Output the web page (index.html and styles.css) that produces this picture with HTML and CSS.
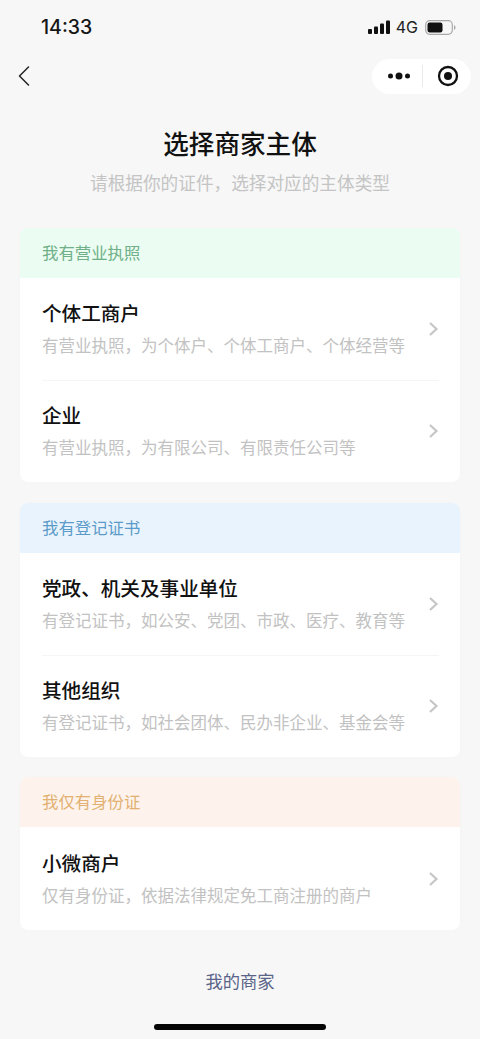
FILE: index.html
```html
<!DOCTYPE html>
<html lang="zh-CN">
<head>
<meta charset="utf-8">
<title>选择商家主体</title>
<link rel="stylesheet" href="styles.css">
</head>
<body>
<div class="page">
  <div class="status">
    <span class="time">14:33</span>
    <div class="status-right">
      <svg class="signal" width="22" height="14" viewBox="0 0 22 14"><rect x="0" y="9" width="4" height="5" rx="1"/><rect x="6" y="6.5" width="4" height="7.5" rx="1"/><rect x="12" y="3.5" width="4" height="10.5" rx="1"/><rect x="18" y="0.5" width="4" height="13.5" rx="1"/></svg>
      <span class="net">4G</span>
      <svg class="battery" width="31" height="15" viewBox="0 0 31 15"><rect x="0.7" y="0.7" width="26.6" height="13.6" rx="4" fill="none" stroke="#a9a9a9" stroke-width="1.2"/><rect x="2.5" y="2.5" width="15" height="10" rx="2.2" fill="#111"/><path d="M29 5.2c1 .3 1.5 1.1 1.5 2.3s-.5 2-1.5 2.3z" fill="#a9a9a9"/></svg>
    </div>
  </div>
  <div class="nav">
    <svg class="back" width="14" height="22" viewBox="0 0 14 22"><path d="M11.5 2 2.500 11l9 9" fill="none" stroke="#222" stroke-width="1.500" stroke-linecap="round" stroke-linejoin="round"/></svg>
    <div class="capsule">
      <svg width="24" height="8" viewBox="0 0 24 8"><circle cx="3.500" cy="4" r="2.500"/><circle cx="12" cy="4" r="3.500"/><circle cx="20.500" cy="4" r="2.500"/></svg>
      <i class="capsule-line"></i>
      <svg width="22" height="22" viewBox="0 0 22 22"><circle cx="11" cy="11" r="9" fill="none" stroke="#111" stroke-width="2.300"/><circle cx="11" cy="11" r="4"/></svg>
    </div>
  </div>
  <h1 class="title">选择商家主体</h1>
  <p class="subtitle">请根据你的证件，选择对应的主体类型</p>

  <section class="card">
    <div class="card-head head-green">我有营业执照</div>
    <div class="row">
      <div class="row-text"><div class="row-title">个体工商户</div><div class="row-sub">有营业执照，为个体户、个体工商户、个体经营等</div></div>
      <svg class="chev" width="11" height="16" viewBox="0 0 11 16"><path d="M2 2l6.500 6L2 14" fill="none" stroke="#c6c6c6" stroke-width="2.200"/></svg>
    </div>
    <div class="row">
      <div class="row-text"><div class="row-title">企业</div><div class="row-sub">有营业执照，为有限公司、有限责任公司等</div></div>
      <svg class="chev" width="11" height="16" viewBox="0 0 11 16"><path d="M2 2l6.500 6L2 14" fill="none" stroke="#c6c6c6" stroke-width="2.200"/></svg>
    </div>
  </section>

  <section class="card">
    <div class="card-head head-blue">我有登记证书</div>
    <div class="row">
      <div class="row-text"><div class="row-title">党政、机关及事业单位</div><div class="row-sub">有登记证书，如公安、党团、市政、医疗、教育等</div></div>
      <svg class="chev" width="11" height="16" viewBox="0 0 11 16"><path d="M2 2l6.500 6L2 14" fill="none" stroke="#c6c6c6" stroke-width="2.200"/></svg>
    </div>
    <div class="row">
      <div class="row-text"><div class="row-title">其他组织</div><div class="row-sub">有登记证书，如社会团体、民办非企业、基金会等</div></div>
      <svg class="chev" width="11" height="16" viewBox="0 0 11 16"><path d="M2 2l6.500 6L2 14" fill="none" stroke="#c6c6c6" stroke-width="2.200"/></svg>
    </div>
  </section>

  <section class="card">
    <div class="card-head head-orange">我仅有身份证</div>
    <div class="row row-single">
      <div class="row-text"><div class="row-title">小微商户</div><div class="row-sub">仅有身份证，依据法律规定免工商注册的商户</div></div>
      <svg class="chev" width="11" height="16" viewBox="0 0 11 16"><path d="M2 2l6.500 6L2 14" fill="none" stroke="#c6c6c6" stroke-width="2.200"/></svg>
    </div>
  </section>

  <div class="mine">我的商家</div>
  <div class="home"></div>
</div>
</body>
</html>
```
FILE: styles.css
```css
* { box-sizing: border-box; }
html, body { margin: 0; padding: 0; }
body {
  background: #f7f7f7;
  font-family: "Noto Sans CJK SC", "Noto Sans", sans-serif;
  color: #111;
}
.page {
  width: 480px;
  height: 1039px;
  overflow: hidden;
  display: flex;
  flex-direction: column;
}
.status {
  height: 54px;
  padding: 0 24px 0 41px;
  display: flex;
  align-items: center;
  justify-content: space-between;
}
.time {
  font: 500 19.500px/26px Inter, "Liberation Sans", sans-serif;
  color: #161616;
}
.status-right { display: flex; align-items: center; }
.signal { fill: #111; margin-right: 6px; }
.net {
  font: 400 16px/20px Inter, "Liberation Sans", sans-serif;
  color: #222;
  margin-right: 7px;
}
.nav {
  height: 44px;
  padding: 0 9px 0 17px;
  display: flex;
  align-items: center;
  justify-content: space-between;
}
.capsule {
  width: 99px;
  height: 35px;
  border-radius: 18px;
  background: #fff;
  display: flex;
  align-items: center;
  padding: 0 0 0 15px;
}
.capsule svg { fill: #111; flex: none; }
.capsule-line {
  width: 1px;
  height: 22px;
  background: #eaeaea;
  margin: 0 14px 0 11px;
}
.title {
  margin: 27px 0 0;
  font-size: 25.600px;
  line-height: 36px;
  font-weight: 500;
  text-align: center;
  color: #111;
}
.subtitle {
  margin: 9px 0 0;
  font-size: 17.650px;
  line-height: 26px;
  text-align: center;
  color: #c4c4c4;
}
.card {
  margin: 20.500px 20px 0;
  border-radius: 8px;
  background: #fff;
  overflow: hidden;
  box-shadow: 0 0 4px rgba(0, 0, 0, 0.015);
}
.subtitle + .card { margin-top: 32px; }
.card-head {
  height: 50px;
  padding-left: 22px;
  font-size: 16.400px;
  line-height: 48px;
}
.head-green { background: #ebfcf2; color: #6fb088; }
.head-blue { background: #e9f3fd; color: #5b9bc9; }
.head-orange { background: #fdf3ec; color: #e2b172; }
.row {
  position: relative;
  height: 102px;
  padding: 0 21px 0 22px;
  display: flex;
  align-items: center;
  justify-content: space-between;
}
.row-single { height: 103px; }
.row + .row::before {
  content: "";
  position: absolute;
  left: 22px;
  right: 21px;
  top: 0;
  height: 1px;
  background: #f5f5f5;
}
.row-text { margin-top: -2px; }
.row-title {
  font-size: 19.600px;
  line-height: 28px;
  font-weight: 500;
  color: #111;
}
.row-sub {
  margin-top: 6px;
  font-size: 16.500px;
  line-height: 24px;
  color: #c2c2c2;
  white-space: nowrap;
}
.chev { flex: none; }
.mine {
  margin-top: 38px;
  font-size: 17.300px;
  line-height: 26px;
  text-align: center;
  color: #5a6488;
}
.home {
  width: 172px;
  height: 6px;
  margin: 30px auto 0;
  border-radius: 3px;
  background: #050505;
}
```
